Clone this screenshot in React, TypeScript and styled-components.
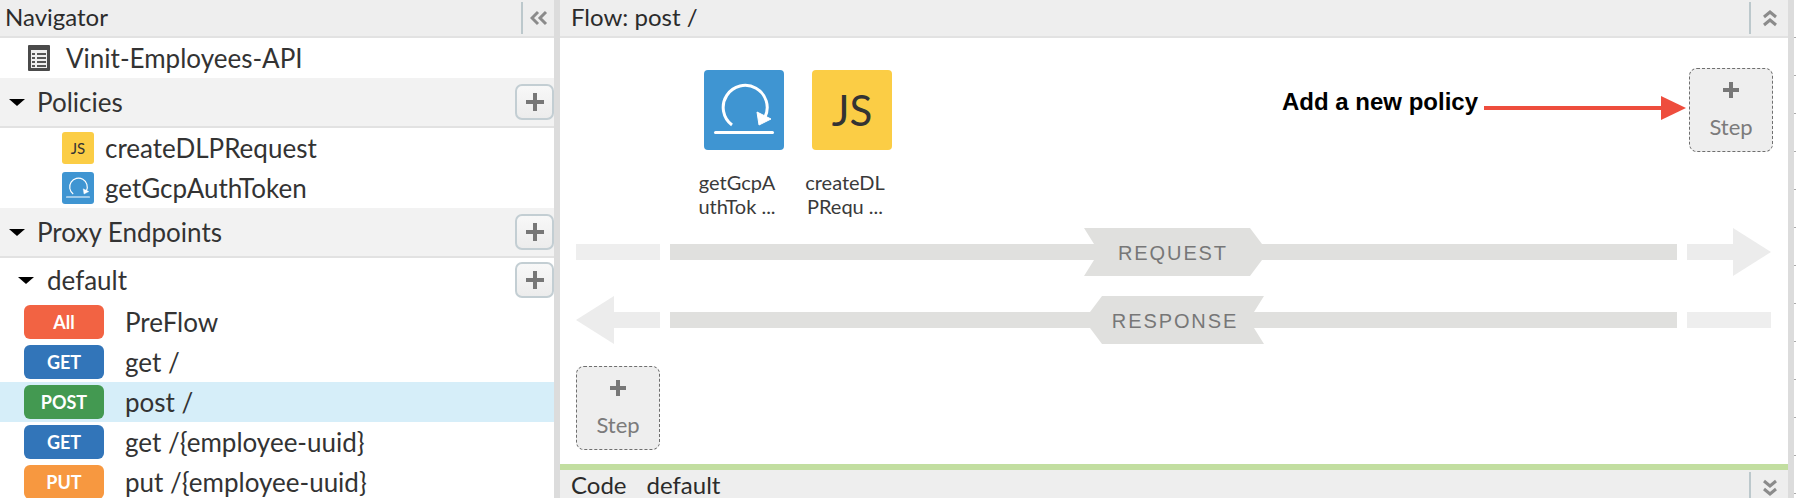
import styled, { createGlobalStyle } from 'styled-components';

const GlobalStyle = createGlobalStyle`
  html, body {
    margin: 0;
    padding: 0;
    background: #fff;
    overflow: hidden;
  }
  body {
    font-family: Lato, 'Open Sans', sans-serif;
    color: #333;
  }
`;

const Page = styled('div')`
  display: flex;
  width: 1796px;
  height: 498px;
  overflow: hidden;
`;

const Navigator = styled('aside')`
  width: 554px;
  flex: none;
  overflow: hidden;
`;

const Splitter = styled('div')`
  width: 6px;
  flex: none;
  background: #dcdcdc;
`;

const Gutter = styled('div')`
  width: 2px;
  flex: none;
  background: repeating-linear-gradient(to bottom, #fff 0, #fff 37px, #aaa 37px, #aaa 38px);
`;

const Main = styled('main')`
  flex: 1;
  min-width: 0;
  display: flex;
  flex-direction: column;
`;

const PaneHeader = styled('header')`
  height: 36px;
  flex: none;
  display: flex;
  align-items: center;
  background: #eee;
  border-bottom: 2px solid #e2e2e2;
  font-size: 24px;
`;

const HeaderTitle = styled('div')<{ $inset: number }>`
  flex: 1;
  padding-left: ${(p) => p.$inset}px;
  padding-bottom: 3px;
  color: #2b2b2b;
  white-space: nowrap;
`;

const HeaderAction = styled('div')<{ $width: number }>`
  width: ${(p) => p.$width}px;
  height: 32px;
  flex: none;
  display: flex;
  align-items: center;
  justify-content: center;
  border-left: 2px solid #bcc8cc;
  box-sizing: border-box;
`;

const RootRow = styled('div')`
  height: 40px;
  display: flex;
  align-items: center;
  padding-left: 28px;
  gap: 16px;
  font-size: 26px;
`;

const Section = styled('div')`
  height: 48px;
  display: flex;
  align-items: center;
  padding-left: 9px;
  background: #f2f2f2;
  border-bottom: 2px solid #e2e2e2;
  font-size: 26px;
`;

const SectionLabel = styled('div')`
  flex: 1;
  margin-left: 12px;
`;

const Caret = styled('span')`
  width: 0;
  height: 0;
  border-left: 8px solid transparent;
  border-right: 8px solid transparent;
  border-top: 7px solid #000;
  flex: none;
`;

const AddButton = styled('button')`
  width: 39px;
  height: 36px;
  flex: none;
  padding: 0;
  display: flex;
  align-items: center;
  justify-content: center;
  box-sizing: border-box;
  background: linear-gradient(#f8f8f8, #ececec);
  border: 2px solid #c3ced3;
  border-radius: 7px;
`;

const PolicyRow = styled('div')`
  height: 40px;
  display: flex;
  align-items: center;
  padding-left: 62px;
  gap: 11px;
  font-size: 26px;
`;

const PolicyIcon = styled('span')<{ $bg: string }>`
  width: 32px;
  height: 32px;
  flex: none;
  display: flex;
  align-items: center;
  justify-content: center;
  border-radius: 3px;
  background: ${(p) => p.$bg};
  font-size: 15px;
`;

const EndpointRow = styled('div')`
  height: 44px;
  display: flex;
  align-items: center;
  padding-left: 18px;
  font-size: 26px;
`;

const EndpointLabel = styled('div')`
  flex: 1;
  margin-left: 13px;
`;

const FlowRow = styled('div')<{ $active?: boolean }>`
  height: 40px;
  display: flex;
  align-items: center;
  padding-left: 24px;
  gap: 21px;
  font-size: 26px;
  background: ${(p) => (p.$active ? '#d6eef9' : 'transparent')};
`;

const Verb = styled('span')<{ $bg: string }>`
  width: 80px;
  height: 34px;
  flex: none;
  display: flex;
  align-items: center;
  justify-content: center;
  border-radius: 6px;
  background: ${(p) => p.$bg};
  color: #fff;
  font-size: 18px;
  font-weight: 700;
`;

const Canvas = styled('section')`
  flex: 1;
  min-height: 0;
  padding: 30px 17px 0 16px;
  display: flex;
  flex-direction: column;
`;

const PolicyStrip = styled('div')`
  height: 160px;
  flex: none;
  display: flex;
  align-items: flex-start;
`;

const PolicyCards = styled('div')`
  display: flex;
  gap: 28px;
  margin-left: 128px;
  padding-top: 2px;
`;

const PolicyCard = styled('div')`
  width: 80px;
  display: flex;
  flex-direction: column;
  align-items: center;
`;

const CardTile = styled('div')<{ $bg: string }>`
  width: 80px;
  height: 80px;
  display: flex;
  align-items: center;
  justify-content: center;
  border-radius: 4px;
  background: ${(p) => p.$bg};
  color: #333;
  font-size: 42px;
`;

const CardName = styled('div')`
  width: 96px;
  margin-top: 20px;
  margin-right: 14px;
  flex: none;
  text-align: center;
  font-size: 20px;
  line-height: 24px;
  color: #3a3a3a;
`;

const Annotation = styled('div')`
  margin-left: 390px;
  margin-right: 1px;
  height: 84px;
  display: flex;
  align-items: center;
  flex: 1;
`;

const AnnotationText = styled('span')`
  font-family: 'Liberation Sans', Arial, sans-serif;
  font-size: 24px;
  font-weight: 700;
  color: #000;
  margin-top: -16px;
  white-space: nowrap;
`;

const StepBox = styled('div')`
  width: 84px;
  height: 84px;
  flex: none;
  box-sizing: border-box;
  display: flex;
  flex-direction: column;
  align-items: center;
  padding-top: 12px;
  gap: 14px;
  background: #eee;
  border: 1px dashed #6f6f6f;
  border-radius: 8px;
  color: #7b7b7b;
  font-size: 22px;
`;

const Lane = styled('div')`
  height: 48px;
  flex: none;
  display: flex;
  align-items: center;
  margin-bottom: 20px;
`;

const MiddleTrack = styled('div')`
  flex: 1;
  margin: 0 10px;
  display: flex;
  align-items: center;
  height: 48px;
`;

const TrackBar = styled('div')<{ $width?: number }>`
  height: 16px;
  background: #e0e0de;
  flex: ${(p) => (p.$width ? `0 0 ${p.$width}px` : '1')};
`;

const Ribbon = styled('div')<{ $width: number; $shape: string; $nudge: number }>`
  width: ${(p) => p.$width}px;
  height: 48px;
  flex: none;
  display: flex;
  align-items: center;
  justify-content: center;
  padding: 2px ${(p) => p.$nudge}px 0 0;
  box-sizing: border-box;
  background: #e0e0de;
  clip-path: polygon(${(p) => p.$shape});
  font-family: 'Liberation Sans', Arial, sans-serif;
  font-size: 20px;
  letter-spacing: 1.9px;
  color: #777;
`;

const FlowEnd = styled('svg')`
  width: 84px;
  height: 48px;
  flex: none;
  display: block;
`;

const LowerStep = styled('div')`
  margin-top: 2px;
`;

const CodeHeader = styled('footer')`
  height: 28px;
  flex: none;
  display: flex;
  align-items: flex-start;
  background: #eee;
  border-top: 6px solid #c2dea0;
  font-size: 24px;
  overflow: hidden;
`;

const CodeLabel = styled('span')`
  margin-left: 11px;
  margin-top: 2px;
  line-height: 26px;
  color: #2b2b2b;
`;

const CodeName = styled(CodeLabel)`
  margin-left: 20px;
`;

const CodeAction = styled(HeaderAction)`
  margin-left: auto;
  margin-top: 2px;
`;

const Plus = () => (
  <svg width='22' height='22' viewBox='0 0 22 22'>
    <path d='M9 2h4v7h7v4h-7v7H9v-7H2V9h7z' fill='#777' />
  </svg>
);

const LoopIcon = ({ size }: { size: number }) => (
  <svg width={size} height={size} viewBox='0 0 80 80'>
    <path d='M28 55A22 22 0 1 1 61 47' fill='none' stroke='#fff' strokeWidth='3' />
    <path d='M53 42l14 7-12 6z' fill='#fff' stroke='#fff' />
    <rect x='10' y='61' width='60' height='3' rx='1.5' fill='#fff' />
  </svg>
);

const ListIcon = () => (
  <svg width='22' height='26' viewBox='0 0 22 26'>
    <rect x='0' y='0' width='22' height='26' rx='1' fill='#4a4a4a' />
    <rect x='3' y='5' width='16' height='18' fill='#eee' />
    <path d='M4 9h3M9 9h9M4 13h3M9 13h9M4 17h3M9 17h9M4 21h3M9 21h9' stroke='#555' strokeWidth='2' />
  </svg>
);

const Chevrons = ({ dir }: { dir: 'left' | 'up' | 'down' }) => {
  const paths = {
    left: 'M8 3L2 9l6 6M16 3l-6 6 6 6',
    up: 'M3 8l6-5 6 5M3 16l6-5 6 5',
    down: 'M3 2l6 5 6-5M3 10l6 5 6-5',
  };
  return (
    <svg width='18' height='18' viewBox='0 0 18 18'>
      <path d={paths[dir]} fill='none' stroke='#8b8b8b' strokeWidth='3' />
    </svg>
  );
};

const ArrowLine = () => (
  <svg width='204' height='24' viewBox='0 0 204 24' style={{ marginLeft: 6, marginTop: -4 }}>
    <rect x='0' y='10' width='179' height='4' fill='#ee4d3d' />
    <path d='M177 0l25 12-25 12z' fill='#ee4d3d' />
  </svg>
);

const Step = () => (
  <StepBox>
    <svg width='18' height='18' viewBox='0 0 18 18'>
      <path d='M7 1h4v6h6v4h-6v6H7v-6H1V7h6z' fill='#777' />
    </svg>
    <span>Step</span>
  </StepBox>
);

const flows = [
  { verb: 'All', color: '#f26343', name: 'PreFlow' },
  { verb: 'GET', color: '#3275b9', name: 'get /' },
  { verb: 'POST', color: '#439951', name: 'post /', active: true },
  { verb: 'GET', color: '#3275b9', name: 'get /{employee-uuid}' },
  { verb: 'PUT', color: '#f79840', name: 'put /{employee-uuid}' },
];

const App = () => {
  return (
    <Page>
      <GlobalStyle />
      <Navigator>
        <PaneHeader>
          <HeaderTitle $inset={5}>Navigator</HeaderTitle>
          <HeaderAction $width={33}>
            <Chevrons dir='left' />
          </HeaderAction>
        </PaneHeader>
        <RootRow>
          <ListIcon />
          Vinit-Employees-API
        </RootRow>
        <Section>
          <Caret />
          <SectionLabel>Policies</SectionLabel>
          <AddButton>
            <Plus />
          </AddButton>
        </Section>
        <PolicyRow>
          <PolicyIcon $bg='#fbcd45'>JS</PolicyIcon>
          createDLPRequest
        </PolicyRow>
        <PolicyRow>
          <PolicyIcon $bg='#3f95d2'>
            <LoopIcon size={32} />
          </PolicyIcon>
          getGcpAuthToken
        </PolicyRow>
        <Section>
          <Caret />
          <SectionLabel>Proxy Endpoints</SectionLabel>
          <AddButton>
            <Plus />
          </AddButton>
        </Section>
        <EndpointRow>
          <Caret />
          <EndpointLabel>default</EndpointLabel>
          <AddButton>
            <Plus />
          </AddButton>
        </EndpointRow>
        {flows.map((flow) => (
          <FlowRow key={flow.name} $active={flow.active}>
            <Verb $bg={flow.color}>{flow.verb}</Verb>
            {flow.name}
          </FlowRow>
        ))}
      </Navigator>
      <Splitter />
      <Main>
        <PaneHeader>
          <HeaderTitle $inset={11}>Flow: post /</HeaderTitle>
          <HeaderAction $width={39}>
            <Chevrons dir='up' />
          </HeaderAction>
        </PaneHeader>
        <Canvas>
          <PolicyStrip>
            <PolicyCards>
              <PolicyCard>
                <CardTile $bg='#3f95d2'>
                  <LoopIcon size={80} />
                </CardTile>
                <CardName>
                  getGcpA
                  <br />
                  uthTok ...
                </CardName>
              </PolicyCard>
              <PolicyCard>
                <CardTile $bg='#fbcd45'>JS</CardTile>
                <CardName>
                  createDL
                  <br />
                  PRequ ...
                </CardName>
              </PolicyCard>
            </PolicyCards>
            <Annotation>
              <AnnotationText>Add a new policy</AnnotationText>
              <ArrowLine />
            </Annotation>
            <Step />
          </PolicyStrip>
          <Lane>
            <FlowEnd viewBox='0 0 84 48'>
              <rect x='0' y='16' width='84' height='16' fill='#eee' />
            </FlowEnd>
            <MiddleTrack>
              <TrackBar $width={424} />
              <Ribbon $nudge={0} $width={178} $shape='0 0, 10px 16px, 10px 32px, 0 48px, 166px 48px, 178px 32px, 178px 16px, 166px 0' style={{ marginLeft: -10 }}>
                REQUEST
              </Ribbon>
              <TrackBar />
            </MiddleTrack>
            <FlowEnd viewBox='0 0 84 48'>
              <path d='M0 16h46V0l38 24-38 24V32H0z' fill='#ececec' />
            </FlowEnd>
          </Lane>
          <Lane>
            <FlowEnd viewBox='0 0 84 48'>
              <path d='M84 16H38V0L0 24l38 24V32h46z' fill='#ececec' />
            </FlowEnd>
            <MiddleTrack>
              <TrackBar $width={420} />
              <Ribbon $nudge={4} $width={174} $shape='12px 0, 0 16px, 0 32px, 12px 48px, 174px 48px, 164px 32px, 164px 16px, 174px 0' style={{ marginRight: -10 }}>
                RESPONSE
              </Ribbon>
              <TrackBar />
            </MiddleTrack>
            <FlowEnd viewBox='0 0 84 48'>
              <rect x='0' y='16' width='84' height='16' fill='#eee' />
            </FlowEnd>
          </Lane>
          <LowerStep>
            <Step />
          </LowerStep>
        </Canvas>
        <CodeHeader>
          <CodeLabel>Code</CodeLabel>
          <CodeName>default</CodeName>
          <CodeAction $width={39}>
            <Chevrons dir='down' />
          </CodeAction>
        </CodeHeader>
      </Main>
      <Splitter />
      <Gutter />
    </Page>
  );
};

export default App;
